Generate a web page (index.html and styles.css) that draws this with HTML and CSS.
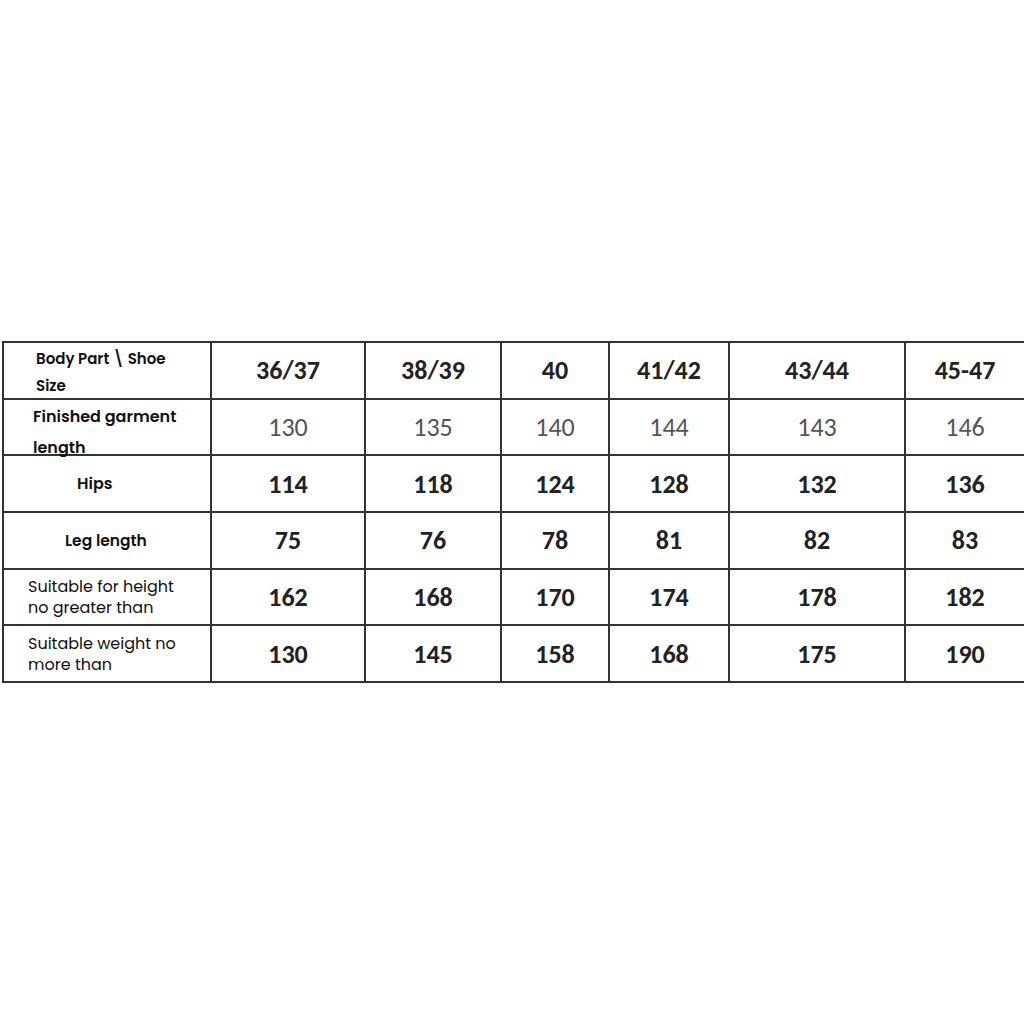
FILE: index.html
```html
<!DOCTYPE html>
<html>
<head>
<meta charset="utf-8">
<link rel="stylesheet" href="styles.css">
</head>
<body>
<div class="page">
<table class="chart">
<colgroup>
<col class="c0"><col class="c1"><col class="c2"><col class="c3"><col class="c4"><col class="c5"><col class="c6">
</colgroup>
<tr>
<td class="lbl"><div class="lbl-top">Body Part \ Shoe<br>Size</div></td>
<td class="num bold">36/37</td><td class="num bold">38/39</td><td class="num bold">40</td><td class="num bold">41/42</td><td class="num bold">43/44</td><td class="num bold">45-47</td>
</tr>
<tr>
<td class="lbl"><div class="lbl-garment">Finished garment<br>length</div></td>
<td class="num light">130</td><td class="num light">135</td><td class="num light">140</td><td class="num light">144</td><td class="num light">143</td><td class="num light">146</td>
</tr>
<tr>
<td class="lbl"><div class="lbl-hips">Hips</div></td>
<td class="num bold">114</td><td class="num bold">118</td><td class="num bold">124</td><td class="num bold">128</td><td class="num bold">132</td><td class="num bold">136</td>
</tr>
<tr>
<td class="lbl"><div class="lbl-leg">Leg length</div></td>
<td class="num bold">75</td><td class="num bold">76</td><td class="num bold">78</td><td class="num bold">81</td><td class="num bold">82</td><td class="num bold">83</td>
</tr>
<tr>
<td class="lbl"><div class="lbl-reg">Suitable for height<br>no greater than</div></td>
<td class="num bold">162</td><td class="num bold">168</td><td class="num bold">170</td><td class="num bold">174</td><td class="num bold">178</td><td class="num bold">182</td>
</tr>
<tr>
<td class="lbl"><div class="lbl-reg">Suitable weight no<br>more than</div></td>
<td class="num bold">130</td><td class="num bold">145</td><td class="num bold">158</td><td class="num bold">168</td><td class="num bold">175</td><td class="num bold">190</td>
</tr>
</table>
</div>
</body>
</html>
```
FILE: styles.css
```css
html, body {
  margin: 0;
  padding: 0;
  background: #ffffff;
}
.page {
  padding-top: 341px;
  padding-left: 2px;
}
.chart {
  border-collapse: collapse;
  table-layout: fixed;
  width: 1022px;
}
.c0 { width: 208px; }
.c1 { width: 154px; }
.c2 { width: 136px; }
.c3 { width: 108px; }
.c4 { width: 120px; }
.c5 { width: 176px; }
.c6 { width: 120px; }
.chart td {
  border: 2px solid #333333;
  height: 54.7px;
  padding: 0;
  vertical-align: middle;
}
.num {
  text-align: center;
  font-family: Carlito, "DejaVu Sans Condensed", "Liberation Sans", sans-serif;
  font-size: 26px;
  color: #222222;
}
.bold { font-weight: 700; }
.light { font-weight: 400; color: #555555; }
.lbl {
  font-family: Poppins, Inter, "Open Sans", sans-serif;
  color: #111111;
}
.lbl-top {
  box-sizing: border-box;
  height: 52px;
  padding-top: 1px;
  padding-left: 32px;
  font-size: 15px;
  font-weight: 600;
  line-height: 27px;
}
.lbl-garment {
  box-sizing: border-box;
  height: 52px;
  padding-top: 0;
  padding-left: 29px;
  font-size: 16px;
  font-weight: 600;
  line-height: 31px;
}
.lbl-hips {
  padding-left: 73px;
  font-size: 16px;
  font-weight: 600;
}
.lbl-leg {
  padding-left: 61px;
  font-size: 15.5px;
  font-weight: 600;
}
.lbl-reg {
  padding-left: 24px;
  font-size: 16px;
  font-weight: 400;
  line-height: 21px;
}
```
